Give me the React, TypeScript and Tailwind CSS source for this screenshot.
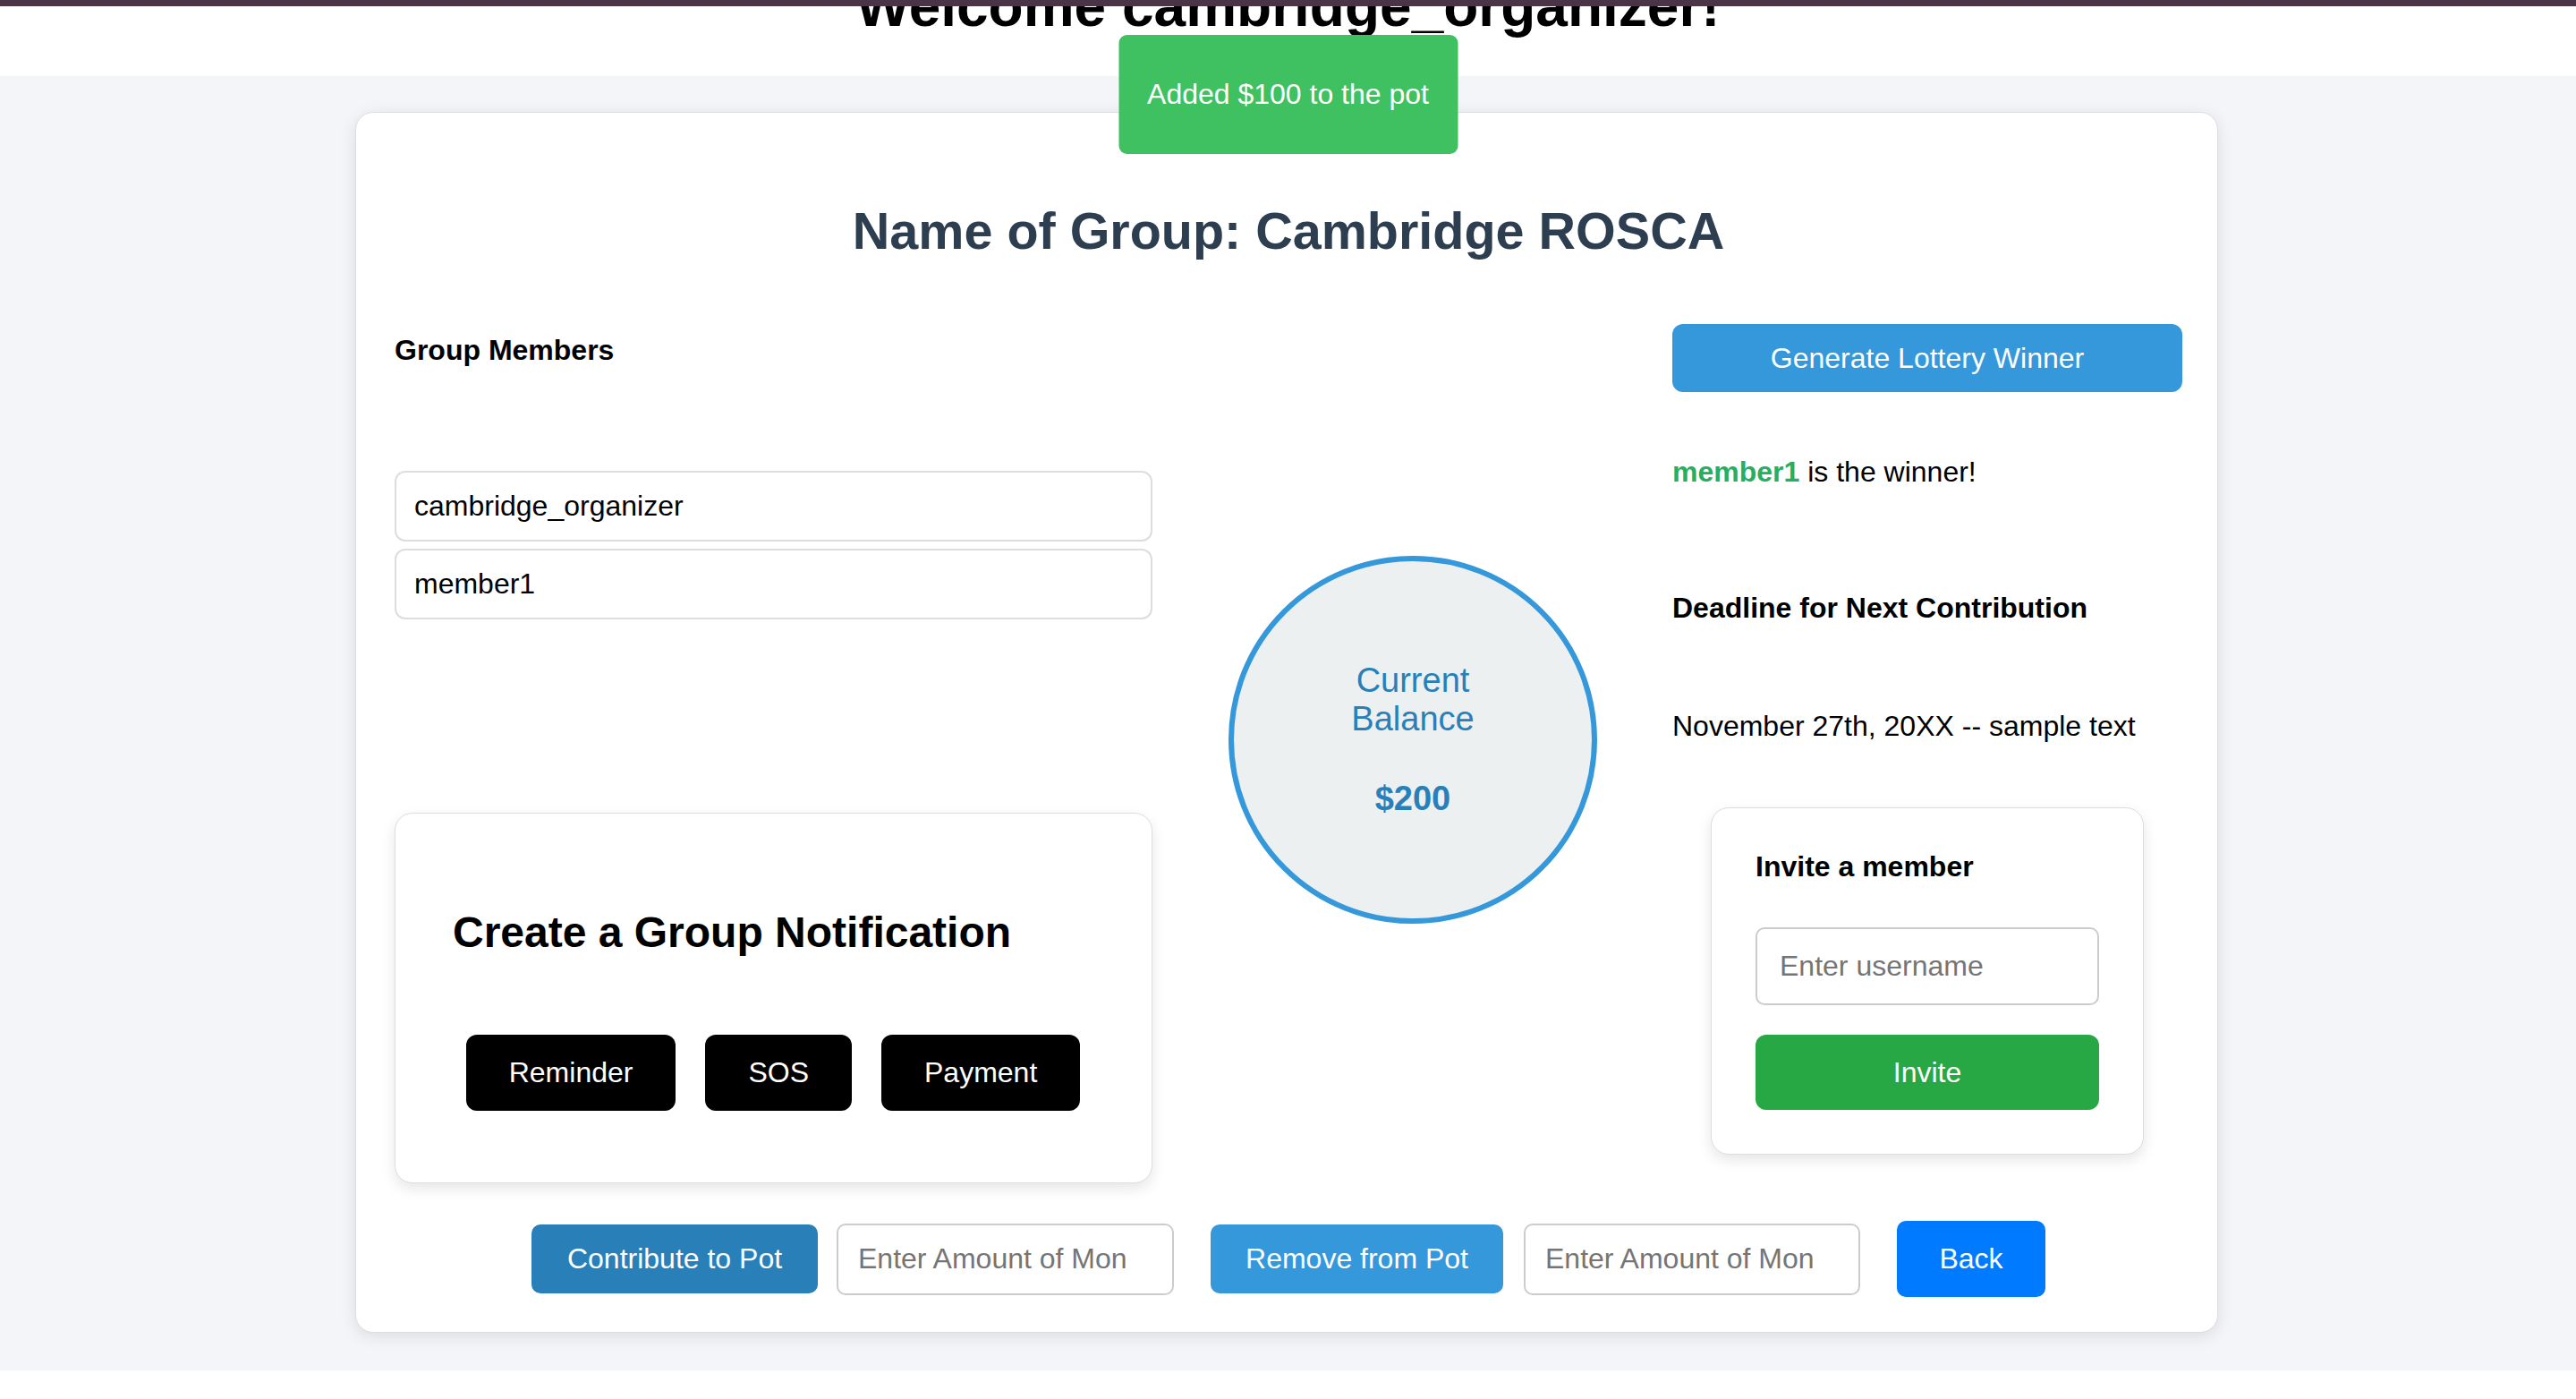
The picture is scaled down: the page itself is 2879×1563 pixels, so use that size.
import React from "react";

export default function App() {
  return (
    <div className="relative min-h-screen bg-white font-['Liberation_Sans',Arial,sans-serif] text-black">
      <div className="h-[7px] bg-[#4a3548]" />
      <div className="h-[78px] overflow-hidden">
        <h1 className="-mt-[37px] text-center text-[64px] font-bold leading-[normal]">
          Welcome cambridge_organizer!
        </h1>
      </div>

      <div className="bg-[#f4f5f9] pt-[40px] pb-[42px]">
        <div className="ml-[397px] w-[2082px] rounded-[20px] border border-[#dedede] bg-white pl-[43px] pr-[39px] pt-[99px] pb-[39px] shadow-[0_4px_18px_rgba(0,0,0,0.10)]">
          <h2 className="text-center text-[57.5px] font-bold leading-[normal] text-[#2c3e50]">
            Name of Group: Cambridge ROSCA
          </h2>

          <div className="mt-[71px] flex items-start">
            {/* Left column */}
            <div className="flex w-[847px] flex-col">
              <h3 className="mt-[11px] text-[32px] font-bold leading-[normal]">Group Members</h3>
              <div className="mt-[116px] flex flex-col gap-[8px]">
                {["cambridge_organizer", "member1"].map((m) => (
                  <div
                    key={m}
                    className="flex h-[79px] items-center rounded-[12px] border-2 border-[#dddddd] pl-[20px] text-[32px] leading-[normal]"
                  >
                    {m}
                  </div>
                ))}
              </div>
              <div className="mt-[216px] h-[414px] rounded-[20px] border border-[#dddddd] bg-white pl-[64px] pr-[64px] pt-[105px] shadow-[0_6px_16px_rgba(0,0,0,0.10)]">
                <h2 className="text-[48px] font-bold leading-[normal]">Create a Group Notification</h2>
                <div className="mt-[87px] flex justify-center gap-[33px] pr-[1px]">
                  {["Reminder", "SOS", "Payment"].map((b) => (
                    <button
                      key={b}
                      className="flex h-[85px] items-center rounded-[12px] bg-black px-[48px] text-[32px] leading-[normal] text-white"
                    >
                      {b}
                    </button>
                  ))}
                </div>
              </div>
            </div>

            {/* Middle column */}
            <div className="ml-[85px] mt-[259px] flex h-[411px] w-[412px] flex-col items-center justify-center rounded-full border-[6px] border-[#3498db] bg-[#ecf0f1] text-[#2980b9]">
              <p className="w-[180px] text-center text-[38px] leading-[normal]">Current Balance</p>
              <p className="mt-[46px] text-[38px] font-bold leading-[normal]">$200</p>
            </div>

            {/* Right column */}
            <div className="ml-[84px] flex w-[570px] flex-col">
              <button className="flex h-[76px] w-full items-center justify-center rounded-[12px] bg-[#3498db] text-[32px] leading-[normal] text-white">
                Generate Lottery Winner
              </button>
              <p className="mt-[71px] text-[32px] leading-[normal]">
                <span className="font-bold text-[#27ae60]">member1</span> is the winner!
              </p>
              <h3 className="mt-[115px] text-[32px] font-bold leading-[normal]">Deadline for Next Contribution</h3>
              <p className="mt-[95px] text-[32px] leading-[normal]">November 27th, 20XX -- sample text</p>
              <div className="mx-auto mt-[72px] w-[484px] rounded-[20px] border border-[#dddddd] bg-white px-[49px] pt-[47px] pb-[49px] shadow-[0_6px_16px_rgba(0,0,0,0.10)]">
                <h3 className="text-[32px] font-bold leading-[normal]">Invite a member</h3>
                <input
                  placeholder="Enter username"
                  className="mt-[49px] h-[87px] w-full rounded-[10px] border-2 border-[#cccccc] px-[25px] text-[32px] outline-none placeholder:text-[#757575]"
                />
                <button className="mt-[33px] flex h-[84px] w-full items-center justify-center rounded-[12px] bg-[#28a745] text-[32px] leading-[normal] text-white">
                  Invite
                </button>
              </div>
            </div>
          </div>

          {/* Bottom row */}
          <div className="mt-[42px] flex items-center justify-center">
            <button className="flex h-[77px] w-[320px] items-center justify-center rounded-[10px] bg-[#2980b9] text-[32px] leading-[normal] text-white">
              Contribute to Pot
            </button>
            <input
              placeholder="Enter Amount of Money"
              className="ml-[21px] h-[80px] w-[377px] rounded-[10px] border-2 border-[#cccccc] pl-[22px] pr-[50px] text-[32px] outline-none placeholder:text-[#757575]"
            />
            <button className="ml-[41px] flex h-[77px] w-[327px] items-center justify-center rounded-[10px] bg-[#3498db] text-[32px] leading-[normal] text-white">
              Remove from Pot
            </button>
            <input
              placeholder="Enter Amount of Money"
              className="ml-[23px] h-[80px] w-[376px] rounded-[10px] border-2 border-[#cccccc] pl-[22px] pr-[50px] text-[32px] outline-none placeholder:text-[#757575]"
            />
            <button className="ml-[41px] flex h-[85px] w-[166px] items-center justify-center rounded-[10px] bg-[#007bff] text-[32px] leading-[normal] text-white">
              Back
            </button>
          </div>
        </div>
      </div>

      <div className="absolute left-1/2 top-[39px] flex h-[133px] w-[379px] -translate-x-1/2 items-center justify-center rounded-[9px] bg-[#3fc161] text-[32px] leading-[normal] text-white">
        Added $100 to the pot
      </div>
    </div>
  );
}
